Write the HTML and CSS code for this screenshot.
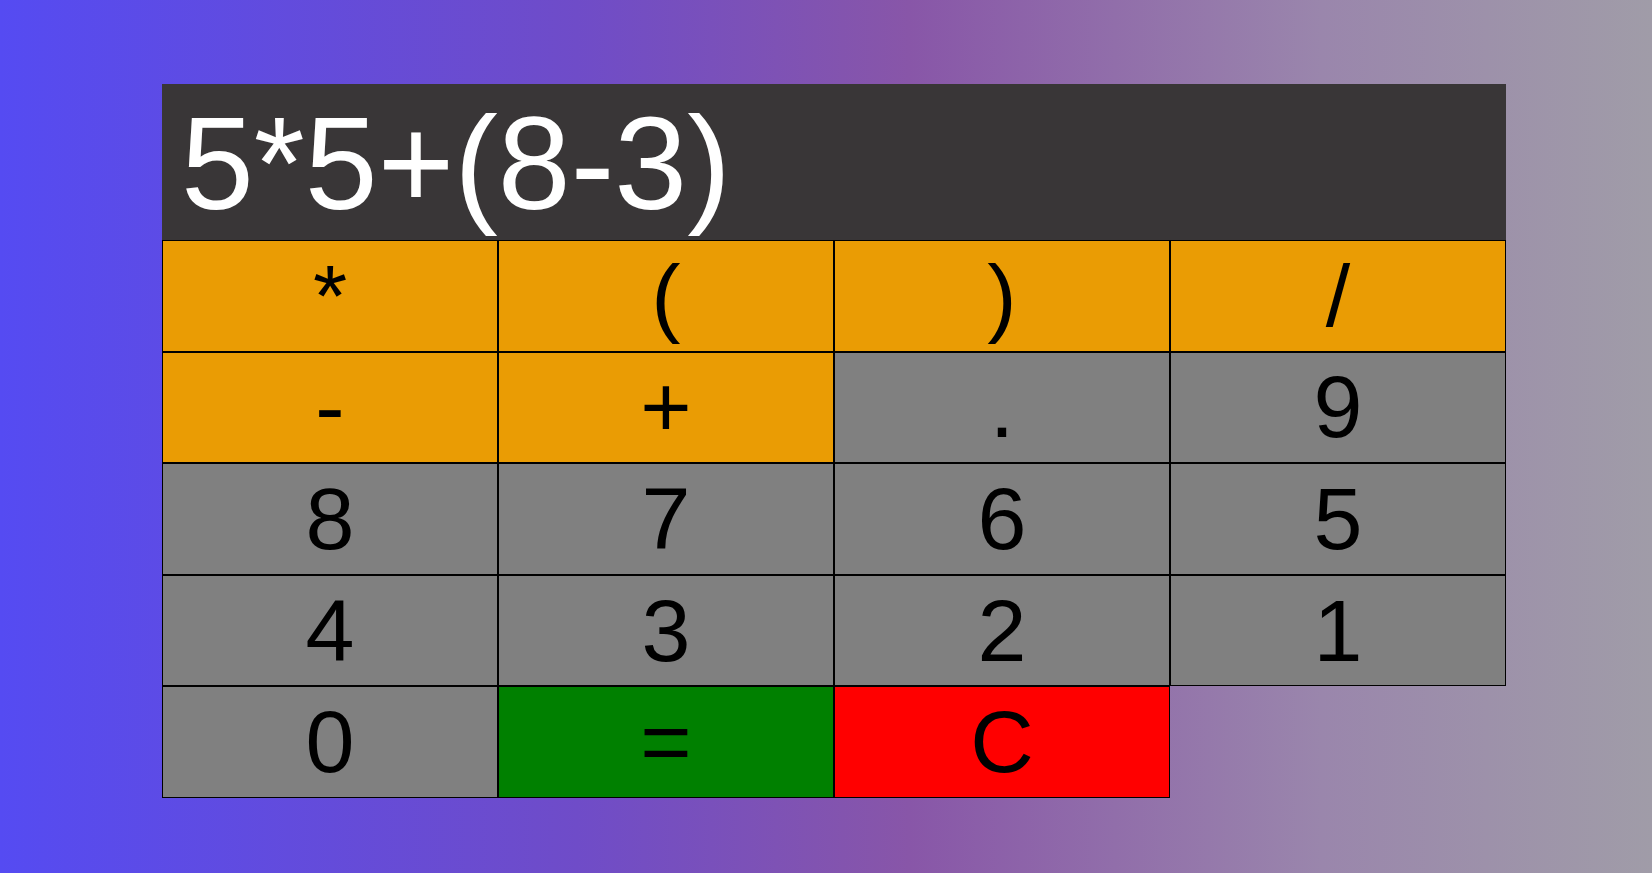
FILE: index.html
```html
<!DOCTYPE html>
<html lang="en">
<head>
<meta charset="utf-8">
<title>Calculator</title>
<link rel="stylesheet" href="styles.css">
</head>
<body>
<main class="calc">
  <div class="display">5*5+(8-3)</div>
  <div class="keys">
    <button class="key op">*</button>
    <button class="key op">(</button>
    <button class="key op">)</button>
    <button class="key op">/</button>
    <button class="key op">-</button>
    <button class="key op">+</button>
    <button class="key num">.</button>
    <button class="key num">9</button>
    <button class="key num">8</button>
    <button class="key num">7</button>
    <button class="key num">6</button>
    <button class="key num">5</button>
    <button class="key num">4</button>
    <button class="key num">3</button>
    <button class="key num">2</button>
    <button class="key num">1</button>
    <button class="key num">0</button>
    <button class="key eq">=</button>
    <button class="key clr">C</button>
  </div>
</main>
</body>
</html>
```
FILE: styles.css
```css
html, body {
  margin: 0;
  padding: 0;
  height: 100%;
}
body {
  background: linear-gradient(to right, #554bf2 0%, #6f4cc8 35%, #8856a8 55%, #9a86ac 80%, #a09ca8 100%);
  font-family: "Liberation Sans", Arial, sans-serif;
  overflow: hidden;
}
.calc {
  margin: 84px 0 0 162px;
  width: 1344px;
}
.display {
  box-sizing: border-box;
  height: 156px;
  background: #393637;
  color: #ffffff;
  font-size: 131px;
  line-height: normal;
  padding: 4px 20px 0 19px;
  white-space: nowrap;
  overflow: hidden;
}
.keys {
  display: grid;
  grid-template-columns: repeat(4, 336px);
  grid-auto-rows: 111.6px;
}
.key {
  box-sizing: border-box;
  margin: 0;
  padding: 0;
  border: 1px solid #000000;
  font-family: "Liberation Sans", Arial, sans-serif;
  font-size: 88px;
  line-height: normal;
  color: #000000;
  text-align: center;
  cursor: pointer;
}
.op { background: #ea9c04; }
.num { background: #808080; }
.eq { background: #008000; }
.clr { background: #ff0000; }
```
